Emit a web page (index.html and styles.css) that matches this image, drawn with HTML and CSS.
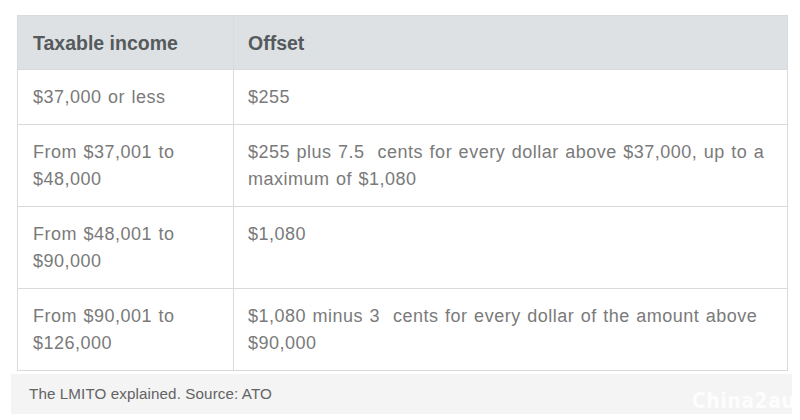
FILE: index.html
```html
<!DOCTYPE html>
<html>
<head>
<meta charset="utf-8">
<link rel="stylesheet" href="styles.css">
</head>
<body>
<div class="page">
  <table class="offset-table">
    <thead>
      <tr><th class="c1">Taxable income</th><th>Offset</th></tr>
    </thead>
    <tbody>
      <tr><td class="c1">$37,000 or less</td><td>$255</td></tr>
      <tr><td class="c1">From $37,001 to $48,000</td><td>$255 plus 7.5&nbsp; cents for every dollar above $37,000, up to a maximum of $1,080</td></tr>
      <tr><td class="c1">From $48,001 to $90,000</td><td>$1,080</td></tr>
      <tr><td class="c1">From $90,001 to $126,000</td><td>$1,080 minus 3&nbsp; cents for every dollar of the amount above $90,000</td></tr>
    </tbody>
  </table>
  <div class="caption">The LMITO explained. Source: ATO</div>
  <div class="watermark">China2au</div>
</div>
</body>
</html>
```
FILE: styles.css
```css
html, body {
  margin: 0;
  padding: 0;
  background: #ffffff;
}
body {
  font-family: "Liberation Sans", Arial, sans-serif;
  width: 800px;
  height: 420px;
  overflow: hidden;
}
.page {
  position: relative;
  padding-top: 15px;
}
.offset-table {
  margin-left: 17px;
  width: 771px;
  border-collapse: collapse;
  table-layout: fixed;
}
.offset-table th,
.offset-table td {
  border: 1px solid #d8dbdd;
  text-align: left;
  vertical-align: top;
  padding: 14px 15px 13px 14px;
}
.offset-table th {
  background: #dde1e3;
  color: #555a5d;
  font-size: 19.5px;
  font-weight: bold;
  line-height: 26px;
  padding-top: 14px;
  padding-bottom: 13px;
}
.offset-table td {
  color: #7a7a7a;
  font-size: 18px;
  letter-spacing: 0.5px;
  word-spacing: 1px;
  line-height: 27px;
}
.offset-table .c1 {
  width: 216px;
  padding-left: 15px;
  box-sizing: border-box;
}
.caption {
  margin: 3px 8px 0 11px;
  height: 40px;
  background: #f4f4f4;
  color: #636363;
  font-size: 15.2px;
  letter-spacing: 0.1px;
  line-height: 40px;
  padding-left: 18px;
}
.watermark {
  position: absolute;
  left: 692px;
  top: 389px;
  color: rgba(255, 255, 255, 0.85);
  font-family: "DejaVu Sans Condensed", "DejaVu Sans", sans-serif;
  font-weight: bold;
  font-size: 21px;
  letter-spacing: 0.5px;
}
```
